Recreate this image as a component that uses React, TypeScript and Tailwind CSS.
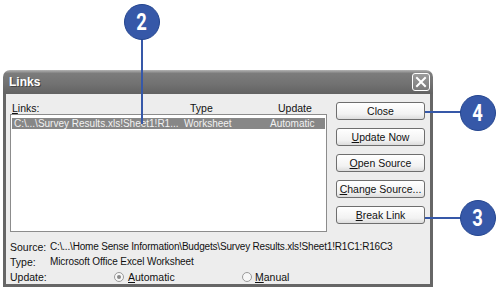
import React from "react";

const font = { fontFamily: '"Liberation Sans", Arial, sans-serif' };

const buttons = [
  { key: "Close", label: <>Close</> },
  { key: "Update", label: <><u>U</u>pdate Now</> },
  { key: "Open", label: <><u>O</u>pen Source</> },
  { key: "Change", label: <><u>C</u>hange Source...</> },
  { key: "Break", label: <><u>B</u>reak Link</> },
];

const Callout = ({ n, className }: { n: number; className: string }) => (
  <div
    className={`absolute flex h-[36px] w-[36px] items-center justify-center rounded-full border border-[#24458f] bg-[#3658a8] text-[23px] font-bold leading-none text-white ${className}`}
    style={{ fontFamily: '"Roboto", "DejaVu Sans", sans-serif' }}
  >
    <span className="inline-block scale-x-[0.8]">{n}</span>
  </div>
);

const Radio = ({ checked }: { checked?: boolean }) => (
  <span className="flex h-[10px] w-[10px] items-center justify-center rounded-full border border-[#9a9a9a] bg-[#f7f7f7]">
    {checked && <span className="h-[4px] w-[4px] rounded-full bg-[#8a8a8a]" />}
  </span>
);

export default function App() {
  return (
    <div className="relative h-[295px] w-[500px] overflow-hidden bg-white pl-[3px] pt-[70px]" style={font}>
      {/* dialog */}
      <div className="flex h-[217px] w-[430px] flex-col">
        <div className="flex h-[25px] items-center justify-between rounded-t-[7px] bg-[linear-gradient(180deg,#b4b4b4_0%,#7c7c7c_14%,#717171_60%,#626262_100%)] pl-[6px] pr-[3px]">
          <span className="text-[12px] font-bold text-white [text-shadow:1px_1px_0_#444]">Links</span>
          <div className="flex h-[18px] w-[18px] items-center justify-center rounded-[3px] border border-white bg-[linear-gradient(180deg,#9c9c9c,#7a7a7a)]">
            <svg width="12" height="12" viewBox="0 0 12 12">
              <path d="M2 2 L10 10 M10 2 L2 10" stroke="white" strokeWidth="2" strokeLinecap="square" />
            </svg>
          </div>
        </div>
        <div className="flex flex-1 flex-col border-x-[3px] border-b-[3px] border-[#666] bg-[#ededed] text-[10.5px] text-[#111]">
          <div className="flex gap-[9px] pl-[4px] pr-[5px] pt-[8px]">
            <div className="flex w-[317px] flex-col">
              <div className="grid h-[12px] grid-cols-[178px_88px_1fr] pl-[2px] leading-[12px]">
                <span><u>L</u>inks:</span>
                <span>Type</span>
                <span>Update</span>
              </div>
              <div className="h-[118px] border border-[#8c8c8c] bg-white p-[1px] pt-[3px]">
                <div className="grid h-[11px] grid-cols-[170px_86px_1fr] bg-[#878787] pl-[2px] text-[10px] leading-[11px] text-[#f2f2f2]">
                  <span className="whitespace-nowrap">C:\...\Survey Results.xls!Sheet1!R1...</span>
                  <span>Worksheet</span>
                  <span>Automatic</span>
                </div>
              </div>
            </div>
            <div className="flex w-[89px] flex-col gap-[8px]">
              {buttons.map((b) => (
                <div
                  key={b.key}
                  className="flex h-[18px] items-center justify-center rounded-[3px] border border-[#6e6e6e] bg-[linear-gradient(180deg,#ffffff,#f2f2f2_70%,#dcdcdc)] leading-none"
                >
                  {b.label}
                </div>
              ))}
            </div>
          </div>
          <div className="mt-[8px] flex flex-col pl-[4px] leading-[14px]">
            <div className="grid h-[14px] grid-cols-[40px_1fr]">
              <span>Source:</span>
              <span className="whitespace-nowrap text-[10px] tracking-[-0.18px]">C:\...\Home Sense Information\Budgets\Survey Results.xls!Sheet1!R1C1:R16C3</span>
            </div>
            <div className="grid h-[15px] grid-cols-[40px_1fr] items-center">
              <span>Type:</span>
              <span className="text-[10px] tracking-[-0.1px]">Microsoft Office Excel Worksheet</span>
            </div>
            <div className="flex h-[15px] items-center">
              <span className="w-[104px]">Update:</span>
              <div className="flex w-[128px] items-center gap-[4px]">
                <Radio checked />
                <span><u>A</u>utomatic</span>
              </div>
              <div className="flex items-center gap-[3px]">
                <Radio />
                <span><u>M</u>anual</span>
              </div>
            </div>
          </div>
        </div>
      </div>

      {/* callouts */}
      <div className="absolute left-[141px] top-[38px] h-[86px] w-[2px] bg-[#3658a8]" />
      <Callout n={2} className="left-[124px] top-[4px]" />
      <div className="absolute left-[425px] top-[111px] h-[2px] w-[37px] bg-[#3658a8]" />
      <Callout n={4} className="left-[460px] top-[95px]" />
      <div className="absolute left-[425px] top-[217px] h-[2px] w-[37px] bg-[#3658a8]" />
      <Callout n={3} className="left-[460px] top-[200px]" />
    </div>
  );
}
